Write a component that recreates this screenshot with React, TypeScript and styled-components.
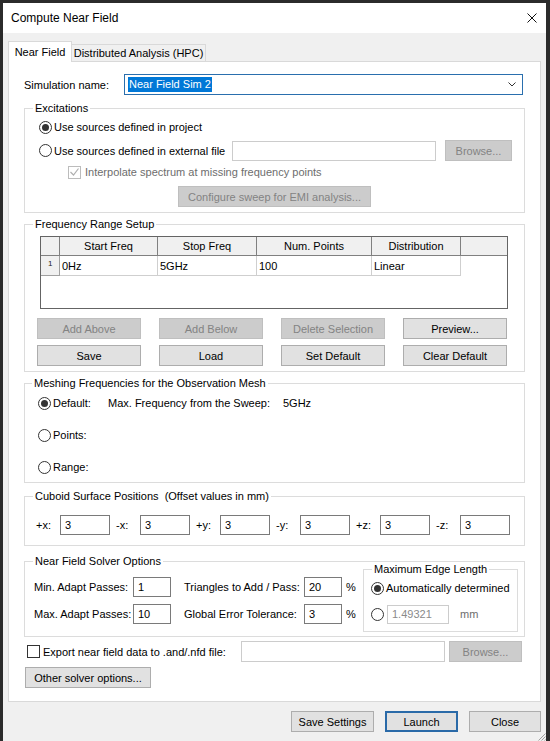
import React from "react";
import styled, { createGlobalStyle, css } from "styled-components";

const GlobalStyle = createGlobalStyle`
  html, body { margin: 0; padding: 0; background: #2b2b2b; }
  body { font-family: "Liberation Sans", Arial, sans-serif; font-size: 11px; color: #000; }
  * { box-sizing: border-box; }
`;

const Window = styled.div`
  position: relative;
  margin: 3px 0 0 3px;
  width: 543px;
  height: 738px;
  background: #f0f0f0;
  display: flex;
  flex-direction: column;
`;

const TitleBar = styled.div`
  height: 30px;
  flex: none;
  background: #fff;
  display: flex;
  align-items: center;
  justify-content: space-between;
  padding: 0 9px 0 8px;
`;

const Title = styled.div`
  font-size: 12px;
`;

const CloseIcon = styled.svg`
  width: 10px;
  height: 10px;
  stroke: #111;
  stroke-width: 1;
  fill: none;
`;

const TabStrip = styled.div`
  height: 28px;
  flex: none;
  display: flex;
  align-items: flex-end;
  padding-left: 5px;
`;

const Tab = styled.div<{ $active?: boolean; $w: number }>`
  width: ${(p) => p.$w}px;
  display: flex;
  align-items: center;
  justify-content: center;
  border: 1px solid #d9d9d9;
  border-bottom: none;
  ${(p) =>
    p.$active
      ? css`
          position: relative;
          z-index: 1;
          height: 21px;
          margin-bottom: -1px;
          background: #fff;
        `
      : css`
          height: 17px;
          border-left: none;
          background: #f0f0f0;
        `}
`;

const Panel = styled.div`
  position: relative;
  margin-left: 5px;
  width: 533px;
  height: 641px;
  flex: none;
  background: #fff;
  border: 1px solid #d9d9d9;
  padding: 12px 0 0 15px;
  display: flex;
  flex-direction: column;
  align-items: flex-start;
`;

const SimRow = styled.div`
  display: flex;
  align-items: center;
  width: 499px;
  height: 21px;
`;

const FieldLabel = styled.div<{ $w: number; $pl?: number }>`
  width: ${(p) => p.$w}px;
  padding-left: ${(p) => p.$pl ?? 0}px;
  flex: none;
  white-space: nowrap;
`;

const Combo = styled.div`
  flex: 1;
  height: 21px;
  border: 1px solid #2a6fae;
  display: flex;
  align-items: center;
  justify-content: space-between;
  padding: 0 6px 0 3px;
`;

const Selected = styled.span`
  background: #0078d7;
  color: #fff;
  line-height: 15px;
  padding: 0 1px;
`;

const Chevron = styled.svg`
  width: 8px;
  height: 5px;
  fill: none;
  stroke: #333;
  stroke-width: 1;
`;

const Group = styled.fieldset<{ $mt: number; $w?: number }>`
  margin: ${(p) => p.$mt}px 0 0 0;
  padding: 0;
  min-width: 0;
  width: ${(p) => p.$w ?? 501}px;
  border: 1px solid #dcdcdc;
  flex: none;
`;

const Legend = styled.legend<{ $ml?: number }>`
  margin-left: ${(p) => p.$ml ?? 8}px;
  padding: 0 2px;
  line-height: 14px;
  font-size: 11px;
`;

const Body = styled.div<{ $pt: number; $pb: number; $pl: number }>`
  display: flex;
  flex-direction: column;
  align-items: flex-start;
  padding: ${(p) => p.$pt}px 0 ${(p) => p.$pb}px ${(p) => p.$pl}px;
`;

const Row = styled.div<{ $h: number; $mt?: number; $ml?: number }>`
  display: flex;
  align-items: center;
  height: ${(p) => p.$h}px;
  margin-top: ${(p) => p.$mt ?? 0}px;
  margin-left: ${(p) => p.$ml ?? 0}px;
  white-space: nowrap;
`;

const RadioDot = styled.span<{ $checked?: boolean }>`
  width: 13px;
  height: 13px;
  flex: none;
  border-radius: 50%;
  border: 1px solid #333;
  background: #fff;
  display: inline-flex;
  align-items: center;
  justify-content: center;
  &::after {
    content: "";
    width: 7px;
    height: 7px;
    border-radius: 50%;
    background: ${(p) => (p.$checked ? "#333" : "transparent")};
  }
`;

const OptionLabel = styled.label<{ $w?: number }>`
  display: flex;
  align-items: center;
  gap: 2px;
  flex: none;
  ${(p) => p.$w !== undefined && css`width: ${p.$w}px;`}
`;

const Option: React.FC<{ checked?: boolean; w?: number; children?: React.ReactNode }> = ({
  checked,
  w,
  children,
}) => (
  <OptionLabel $w={w}>
    <RadioDot $checked={checked} />
    {children && <span>{children}</span>}
  </OptionLabel>
);

const CheckBox = styled.span<{ $disabled?: boolean }>`
  width: 13px;
  height: 13px;
  flex: none;
  border: 1px solid ${(p) => (p.$disabled ? "#bcbcbc" : "#333")};
  background: #fff;
  display: inline-flex;
  align-items: center;
  justify-content: center;
`;

const CheckMark = styled.svg`
  width: 9px;
  height: 8px;
  fill: none;
  stroke: #b0b0b0;
  stroke-width: 1.2;
`;

const MutedText = styled.span<{ $ml?: number }>`
  color: #6d6d6d;
  margin-left: ${(p) => p.$ml ?? 0}px;
`;

const TextBox = styled.div<{ $w: number; $disabled?: boolean; $h?: number; $ml?: number }>`
  width: ${(p) => p.$w}px;
  height: ${(p) => p.$h ?? 20}px;
  flex: none;
  margin-left: ${(p) => p.$ml ?? 0}px;
  border: 1px solid ${(p) => (p.$disabled ? "#cccccc" : "#7a7a7a")};
  background: #fff;
  display: flex;
  align-items: center;
  padding-left: 4px;
  color: ${(p) => (p.$disabled ? "#8a8a8a" : "#000")};
`;

const Btn = styled.div<{ $w?: number; $disabled?: boolean; $default?: boolean; $ml?: number }>`
  width: ${(p) => (p.$w ? `${p.$w}px` : "auto")};
  height: 21px;
  flex: none;
  margin-left: ${(p) => p.$ml ?? 0}px;
  display: flex;
  align-items: center;
  justify-content: center;
  white-space: nowrap;
  background: ${(p) => (p.$disabled ? "#cccccc" : "#e1e1e1")};
  border: 1px solid ${(p) => (p.$disabled ? "#bfbfbf" : "#adadad")};
  color: ${(p) => (p.$disabled ? "#838383" : "#000")};
  ${(p) =>
    p.$default &&
    css`
      border: 2px solid #2a6aa8;
    `}
`;

/* Frequency table */
const TableBox = styled.div`
  margin-left: 3px;
  width: 468px;
  height: 73px;
  border: 1px solid #646464;
  background: #fff;
`;

const TRow = styled.div`
  display: grid;
  grid-template-columns: 19px 98px 99px 115px 89px 1fr;
`;

const HeadCell = styled.div<{ $last?: boolean }>`
  height: 19px;
  background: #f0f0f0;
  border-bottom: 1px solid #808080;
  border-right: ${(p) => (p.$last ? "none" : "1px solid #808080")};
  display: flex;
  align-items: center;
  justify-content: center;
`;

const RowHead = styled.div`
  height: 20px;
  background: #f0f0f0;
  border-right: 1px solid #a0a0a0;
  border-bottom: 1px solid #a0a0a0;
  font-size: 8px;
  padding: 3px 0 0 7px;
  color: #222;
`;

const DataCell = styled.div<{ $empty?: boolean }>`
  height: 20px;
  display: flex;
  align-items: center;
  padding-left: 2px;
  ${(p) =>
    !p.$empty &&
    css`
      border-right: 1px solid #cfcfcf;
      border-bottom: 1px solid #cfcfcf;
    `}
`;

const ButtonGrid = styled.div`
  margin-top: 9px;
  width: 470px;
  display: grid;
  grid-template-columns: repeat(4, 104px);
  justify-content: space-between;
  row-gap: 6px;
`;

/* Cuboid */
const CuboidGrid = styled.div`
  display: grid;
  grid-template-columns: repeat(6, 80px);
  height: 20px;
`;

const Pair = styled.div`
  display: flex;
  align-items: center;
`;

const PairLabel = styled.span`
  width: 24px;
  flex: none;
`;

/* Solver options */
const SolverBody = styled.div`
  display: flex;
  align-items: flex-start;
  padding: 0 6px 4px 9px;
`;

const SolverGrid = styled.div`
  margin-top: 9px;
  display: grid;
  grid-template-columns: 99px 51px 120px 42px 12px;
  grid-auto-rows: 20px;
  row-gap: 7px;
  align-items: center;
  white-space: nowrap;
`;

const SubGroup = styled(Group)`
  margin: -6px 0 0 auto;
  height: 70px;
`;

const BottomRow = styled.div<{ $mt: number; $ml: number }>`
  display: flex;
  align-items: center;
  height: 21px;
  margin-top: ${(p) => p.$mt}px;
  margin-left: ${(p) => p.$ml}px;
  white-space: nowrap;
`;

const Footer = styled.div`
  flex: 1;
  display: flex;
  justify-content: flex-end;
  align-items: flex-start;
  gap: 11px;
  padding: 9px 5px 0 0;
`;

const Grip = styled.svg`
  position: absolute;
  right: 0;
  bottom: 0;
  width: 10px;
  height: 10px;
  stroke: #a0a0a0;
  stroke-width: 1;
`;

export default function App() {
  const cuboid = [
    ["+x:", "3"],
    ["-x:", "3"],
    ["+y:", "3"],
    ["-y:", "3"],
    ["+z:", "3"],
    ["-z:", "3"],
  ];
  return (
    <>
      <GlobalStyle />
      <Window>
        <TitleBar>
          <Title>Compute Near Field</Title>
          <CloseIcon viewBox="0 0 10 10">
            <path d="M0.5 0.5L9.5 9.5M9.5 0.5L0.5 9.5" />
          </CloseIcon>
        </TitleBar>
        <TabStrip>
          <Tab $active $w={64}>
            Near Field
          </Tab>
          <Tab $w={134}>Distributed Analysis (HPC)</Tab>
        </TabStrip>
        <Panel>
          <SimRow>
            <FieldLabel $w={100}>Simulation name:</FieldLabel>
            <Combo>
              <Selected>Near Field Sim 2</Selected>
              <Chevron viewBox="0 0 8 5">
                <path d="M0.5 0.5L4 4L7.5 0.5" />
              </Chevron>
            </Combo>
          </SimRow>

          <Group $mt={6}>
            <Legend>Excitations</Legend>
            <Body $pt={2} $pb={5} $pl={14}>
              <Row $h={20}>
                <Option checked>Use sources defined in project</Option>
              </Row>
              <Row $h={21} $mt={3}>
                <Option w={193}>Use sources defined in external file</Option>
                <TextBox $w={204} $disabled />
                <Btn $w={67} $ml={9} $disabled>
                  Browse...
                </Btn>
              </Row>
              <Row $h={16} $mt={3} $ml={29}>
                <CheckBox $disabled>
                  <CheckMark viewBox="0 0 9 8">
                    <path d="M0.5 4L3.5 7L8.5 0.5" />
                  </CheckMark>
                </CheckBox>
                <MutedText $ml={4}>Interpolate spectrum at missing frequency points</MutedText>
              </Row>
              <Row $h={21} $mt={6} $ml={139}>
                <Btn $w={193} $disabled>
                  Configure sweep for EMI analysis...
                </Btn>
              </Row>
            </Body>
          </Group>

          <Group $mt={4}>
            <Legend>Frequency Range Setup</Legend>
            <Body $pt={5} $pb={5} $pl={12}>
              <TableBox>
                <TRow>
                  <HeadCell />
                  <HeadCell>Start Freq</HeadCell>
                  <HeadCell>Stop Freq</HeadCell>
                  <HeadCell>Num. Points</HeadCell>
                  <HeadCell>Distribution</HeadCell>
                  <HeadCell $last />
                </TRow>
                <TRow>
                  <RowHead>1</RowHead>
                  <DataCell>0Hz</DataCell>
                  <DataCell>5GHz</DataCell>
                  <DataCell>100</DataCell>
                  <DataCell>Linear</DataCell>
                  <DataCell $empty />
                </TRow>
              </TableBox>
              <ButtonGrid>
                <Btn $disabled>Add Above</Btn>
                <Btn $disabled>Add Below</Btn>
                <Btn $disabled>Delete Selection</Btn>
                <Btn>Preview...</Btn>
                <Btn>Save</Btn>
                <Btn>Load</Btn>
                <Btn>Set Default</Btn>
                <Btn>Clear Default</Btn>
              </ButtonGrid>
            </Body>
          </Group>

          <Group $mt={4}>
            <Legend $ml={7}>Meshing Frequencies for the Observation Mesh</Legend>
            <Body $pt={3} $pb={5} $pl={13}>
              <Row $h={20}>
                <Option checked w={70}>
                  Default:
                </Option>
                <FieldLabel $w={175}>Max. Frequency from the Sweep:</FieldLabel>
                <span>5GHz</span>
              </Row>
              <Row $h={20} $mt={12}>
                <Option>Points:</Option>
              </Row>
              <Row $h={20} $mt={12}>
                <Option>Range:</Option>
              </Row>
            </Body>
          </Group>

          <Group $mt={6}>
            <Legend>Cuboid Surface Positions&nbsp; (Offset values in mm)</Legend>
            <Body $pt={12} $pb={10} $pl={11}>
              <CuboidGrid>
                {cuboid.map(([l, v]) => (
                  <Pair key={l}>
                    <PairLabel>{l}</PairLabel>
                    <TextBox $w={50}>{v}</TextBox>
                  </Pair>
                ))}
              </CuboidGrid>
            </Body>
          </Group>

          <Group $mt={8}>
            <Legend>Near Field Solver Options</Legend>
            <SolverBody>
              <SolverGrid>
                <span>Min. Adapt Passes:</span>
                <TextBox $w={38}>1</TextBox>
                <span>Triangles to Add / Pass:</span>
                <TextBox $w={38}>20</TextBox>
                <span>%</span>
                <span>Max. Adapt Passes:</span>
                <TextBox $w={38}>10</TextBox>
                <span>Global Error Tolerance:</span>
                <TextBox $w={38}>3</TextBox>
                <span>%</span>
              </SolverGrid>
              <SubGroup $mt={0} $w={155}>
                <Legend $ml={8}>Maximum Edge Length</Legend>
                <Body $pt={2} $pb={7} $pl={7}>
                  <Row $h={20}>
                    <Option checked>Automatically determined</Option>
                  </Row>
                  <Row $h={20} $mt={6}>
                    <Option />
                    <TextBox $w={62} $h={19} $ml={3} $disabled>
                      1.49321
                    </TextBox>
                    <MutedText $ml={11}>mm</MutedText>
                  </Row>
                </Body>
              </SubGroup>
            </SolverBody>
          </Group>

          <BottomRow $mt={4} $ml={3}>
            <CheckBox />
            <FieldLabel $w={201} $pl={3}>
              Export near field data to .and/.nfd file:
            </FieldLabel>
            <TextBox $w={204} $h={21} $disabled />
            <Btn $w={73} $ml={4} $disabled>
              Browse...
            </Btn>
          </BottomRow>
          <BottomRow $mt={5} $ml={1}>
            <Btn $w={126}>Other solver options...</Btn>
          </BottomRow>
        </Panel>
        <Footer>
          <Btn $w={83}>Save Settings</Btn>
          <Btn $w={73} $default>
            Launch
          </Btn>
          <Btn $w={72}>Close</Btn>
        </Footer>
        <Grip viewBox="0 0 10 10">
          <path d="M9.5 2.5L2.5 9.5M9.5 5.5L5.5 9.5M9.5 8.5L8.5 9.5" />
        </Grip>
      </Window>
    </>
  );
}
